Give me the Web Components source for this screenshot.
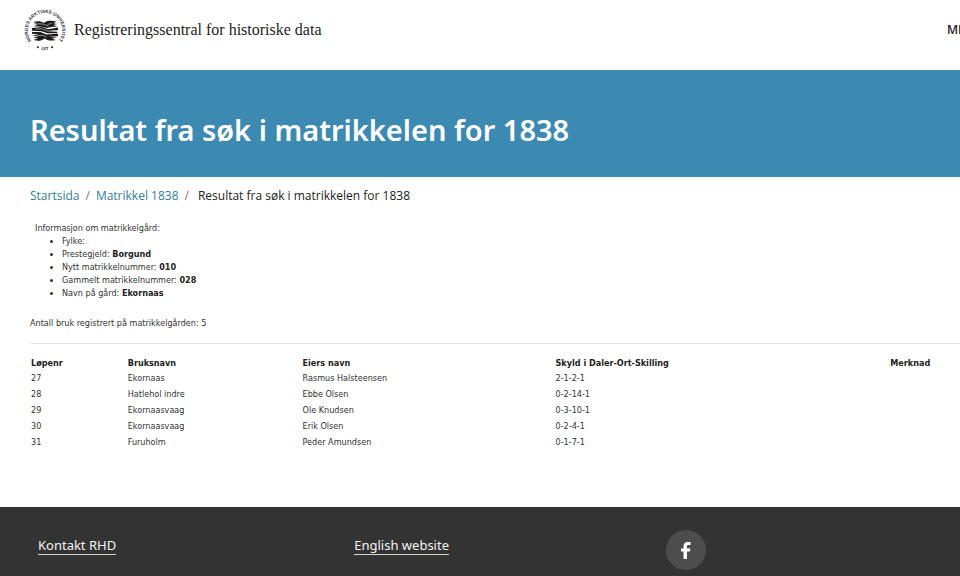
<!DOCTYPE html>
<html lang="nb">
<head>
<meta charset="utf-8">
<title>Resultat fra søk i matrikkelen for 1838</title>
<style>
body { margin: 0; background: #fff; color: #222; font-family: "Open Sans", "Noto Sans", sans-serif; overflow-x: hidden; }
</style>
</head>
<body>
<rhd-page>
  <rhd-header slot="header"></rhd-header>
  <rhd-banner slot="header">Resultat fra søk i matrikkelen for 1838</rhd-banner>
  <rhd-breadcrumb></rhd-breadcrumb>
  <rhd-farm-info></rhd-farm-info>
  <rhd-holdings></rhd-holdings>
  <rhd-footer slot="footer"></rhd-footer>
</rhd-page>
<script>
const define = (name, html) => customElements.define(name, class extends HTMLElement {
  constructor() {
    super();
    this.attachShadow({ mode: "open" }).innerHTML = html;
  }
});

define("rhd-seal", `
<style>
:host { display: block; flex: none; width: 42px; height: 42px; }
svg { display: block; width: 100%; height: 100%; }
text { font: 700 11px "Liberation Sans", sans-serif; fill: #333; }
</style>
<svg viewBox="0 0 100 100" role="img" aria-label="UiT Norges arktiske universitet">
  <defs>
    <path id="upper" d="M24 82A41 41 0 1 1 76 82"/>
    <path id="lower" d="M22 89A48 48 0 0 0 78 89"/>
  </defs>
  <text><textPath href="#upper" startOffset="50%" text-anchor="middle">NORGES ARKTISKE UNIVERSITET</textPath></text>
  <text><textPath href="#lower" startOffset="50%" text-anchor="middle">UIT</textPath></text>
  <g fill="#1c1c1c">
    <circle cx="33" cy="91" r="2.4"/><circle cx="67" cy="91" r="2.4"/>
    <path d="M22 31C34 28 40 29 47 33C55 27 65 27 77 30L70 34L79 36L70 38L80 42C68 42 61 43 54 45L43 42L24 41L33 37L22 36L31 34Z"/>
    <path d="M19 45L43 43L57 48L81 44V50L61 53L79 54V58L56 58L42 53L19 52Z"/>
    <path d="M19 55L39 55L53 61L81 59V65L59 66L78 68L67 70L75 74C62 77 54 74 49 70C41 76 32 77 23 73L33 70L22 67L35 65L19 63L35 60L19 59Z"/>
  </g>
  <path d="M32 35L46 36L58 41M66 34L56 37M28 48L43 47L57 53L73 51M30 63L45 63L53 67" fill="none" stroke="#fff" stroke-width="1.2"/>
</svg>`);

define("rhd-header", `
<style>
:host { display: block; overflow: hidden; }
header { display: flex; align-items: center; height: 60px; padding: 0 0 10px 24px; }
.brand { display: flex; align-items: center; gap: 8px; color: #1c1c1c; text-decoration: none;
  font: 16px/24px "Liberation Serif", serif; white-space: nowrap; }
nav { margin-left: auto; width: 13px; }
button { display: block; border: 0; padding: 0; background: none; color: #222; white-space: nowrap;
  font: 600 12px/22px "Open Sans", sans-serif; }
</style>
<header>
  <a class="brand" href="#"><rhd-seal></rhd-seal><span>Registreringssentral for historiske data</span></a>
  <nav><button type="button">MENY</button></nav>
</header>`);

define("rhd-banner", `
<style>
:host { display: block; background: #3c8ab2; color: #fff; padding: 40px 30px 27px; }
h1 { margin: 0; font: 600 29px/40px "Noto Sans", sans-serif; }
</style>
<h1><slot></slot></h1>`);

define("rhd-breadcrumb", `
<style>
:host { display: block; padding: 9px 30px 7px; font-size: 12px; line-height: 20px; }
ol { display: flex; margin: 0; padding: 0; list-style: none; }
li + li::before { content: "/"; color: #777; padding: 0 6px; }
li:last-child::before { padding-right: 9px; }
a { color: #2f7f93; text-decoration: none; }
</style>
<nav aria-label="Brødsmulesti"><ol>
  <li><a href="#">Startsida</a></li>
  <li><a href="#">Matrikkel 1838</a></li>
  <li aria-current="page">Resultat fra søk i matrikkelen for 1838</li>
</ol></nav>`);

define("rhd-farm-info", `
<style>
:host { display: block; padding: 9px 0 0 30px; font: 9px/13px "DejaVu Sans Condensed", "DejaVu Sans", sans-serif; color: #333; }
p { margin: 0; }
.lead { padding: 0 5px; }
ul { margin: 0 0 17px; padding: 0 0 0 32px; }
hr { border: 0; border-top: 1px solid #e4e4e4; margin: 13px 0 0; }
b { color: #222; }
</style>
<p class="lead">Informasjon om matrikkelgård:</p>
<ul>
  <li>Fylke:</li>
  <li>Prestegjeld: <b>Borgund</b></li>
  <li>Nytt matrikkelnummer: <b>010</b></li>
  <li>Gammelt matrikkelnummer: <b>028</b></li>
  <li>Navn på gård: <b>Ekornaas</b></li>
</ul>
<p>Antall bruk registrert på matrikkelgården: 5</p>
<hr>`);

customElements.define("rhd-holdings", class extends HTMLElement {
  constructor() {
    super();
    const rows = [
      ["27", "Ekornaas", "Rasmus Halsteensen", "2-1-2-1", ""],
      ["28", "Hatlehol indre", "Ebbe Olsen", "0-2-14-1", ""],
      ["29", "Ekornaasvaag", "Ole Knudsen", "0-3-10-1", ""],
      ["30", "Ekornaasvaag", "Erik Olsen", "0-2-4-1", ""],
      ["31", "Furuholm", "Peder Amundsen", "0-1-7-1", ""]
    ];
    this.attachShadow({ mode: "open" }).innerHTML = `
<style>
:host { display: block; padding: 12px 0 57px 30px; font: 9px/16px "DejaVu Sans Condensed", "DejaVu Sans", sans-serif; color: #333; }
table { width: 100%; table-layout: fixed; border-collapse: collapse; }
th, td { padding: 0 1px; text-align: left; }
th { color: #222; line-height: 14px; }
.nr { width: 10.4%; } .name { width: 18.8%; } .owner { width: 27.2%; } .tax { width: 36%; }
</style>
<table>
  <colgroup><col class="nr"><col class="name"><col class="owner"><col class="tax"><col></colgroup>
  <thead><tr><th scope="col">Løpenr</th><th scope="col">Bruksnavn</th><th scope="col">Eiers navn</th><th scope="col">Skyld i Daler-Ort-Skilling</th><th scope="col">Merknad</th></tr></thead>
  <tbody>${rows.map(r => `<tr>${r.map(c => `<td>${c}</td>`).join("")}</tr>`).join("")}</tbody>
</table>`;
  }
});

define("rhd-footer", `
<style>
:host { display: block; background: #333; color: #fff; padding: 23px 0 6px 38px; font: 13px/18px "Noto Sans", sans-serif; }
.cols { display: grid; grid-template-columns: 34.3% 33.8% 1fr; align-items: start; }
.link { justify-self: start; margin-top: 7px; color: #f4f4f4; text-decoration: none; border-bottom: 1px solid #d8d8cc; line-height: 17px; }
.fb { display: flex; align-items: center; justify-content: center; width: 40px; height: 40px; border-radius: 50%; background: #4d4d4d; }
.fb svg { width: 10px; height: 17px; }
</style>
<footer class="cols">
  <a class="link" href="#">Kontakt RHD</a>
  <a class="link" href="#">English website</a>
  <a class="fb" href="#" aria-label="Facebook"><svg viewBox="0 0 10 17"><path fill="#fff" d="M2.5 17V9.5H0V6.4H2.5V4.4C2.5 1.6 4 0 6.8 0H9.5V3H7.5C6.3 3 6 3.5 6 4.5V6.4H9.4L8.9 9.5H6V17Z"/></svg></a>
</footer>`);

define("rhd-page", `
<style>
:host { display: flex; flex-direction: column; min-height: 100vh; }
main { flex: 1; }
</style>
<slot name="header"></slot>
<main><slot></slot></main>
<slot name="footer"></slot>`);
</script>
</body>
</html>
